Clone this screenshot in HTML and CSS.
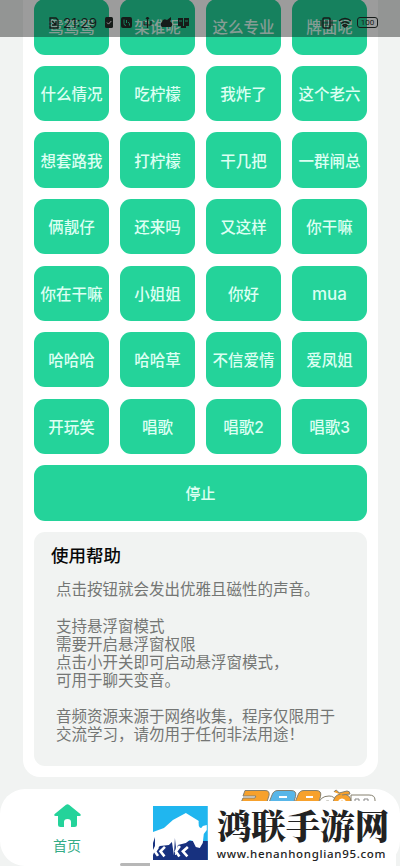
FILE: index.html
```html
<!DOCTYPE html>
<html lang="zh-CN">
<head>
<meta charset="utf-8">
<title>首页</title>
<link rel="stylesheet" href="styles.css">
</head>
<body>
<main class="card">
  <section class="grid">
    <button>鸳鸳鸳</button><button>架谁呢</button><button>这么专业</button><button>牌面呢</button>
    <button>什么情况</button><button>吃柠檬</button><button>我炸了</button><button>这个老六</button>
    <button>想套路我</button><button>打柠檬</button><button>干几把</button><button>一群闸总</button>
    <button>俩靓仔</button><button>还来吗</button><button>又这样</button><button>你干嘛</button>
    <button>你在干嘛</button><button>小姐姐</button><button>你好</button><button class="latin">mua</button>
    <button>哈哈哈</button><button>哈哈草</button><button>不信爱情</button><button>爱凤姐</button>
    <button>开玩笑</button><button>唱歌</button><button>唱歌2</button><button>唱歌3</button>
    <button class="stop">停止</button>
  </section>
  <section class="help">
    <h2>使用帮助</h2>
    <p>点击按钮就会发出优雅且磁性的声音。<br><br>支持悬浮窗模式<br>需要开启悬浮窗权限<br>点击小开关即可启动悬浮窗模式，<br>可用于聊天变音。<br><br>音频资源来源于网络收集，程序仅限用于<br>交流学习，请勿用于任何非法用途！</p>
  </section>
</main>

<header class="status">
  <div class="status-left">
    <svg width="10" height="12" viewBox="0 0 10 12" fill="none" stroke="currentColor" stroke-width="1.3"><path d="M1 1h6l2 2v8H1zM3 4l4 4M7 4v4H3"/></svg>
    <span class="clock">21:29</span>
    <svg class="check" width="8" height="11" viewBox="0 0 8 11"><rect width="8" height="11" rx="1.5" fill="currentColor"/><path d="M2 5.5l1.500 1.600L6.300 4" fill="none" stroke="#969696"/></svg>
    <svg class="call" width="11" height="11" viewBox="0 0 11 11"><rect width="11" height="11" rx="2" fill="currentColor"/><path d="M3 2.500v4q0 2 2 2M5.500 3v3M7 5q2 1 1.500 3.500" fill="none" stroke="#168461"/></svg>
    <svg class="usb" width="9" height="12" viewBox="0 0 9 12" fill="none" stroke="currentColor" stroke-width="1.2"><path d="M4.500 0v11M1 4v4h7V4M3 2l1.500-2L6 2"/></svg>
    <svg class="cloud" width="13" height="11" viewBox="0 0 13 11"><path d="M2 10a3 3 0 0 1 0-5Q3 1 7 3l4-3v3l-1 1q4 3 1 6z" fill="currentColor"/></svg>
    <svg class="book" width="11" height="11" viewBox="0 0 11 11"><path d="M0 1h5v8H0zM6 1h5v8H6zM3 9h5v2H3z" fill="currentColor"/><path d="M1 4h3M7 4h3" stroke="#168461"/></svg>
  </div>
  <div class="status-right">
    <svg width="13" height="12" viewBox="0 0 13 12" fill="none" stroke="currentColor"><rect x="3" y="1" width="7" height="10" rx="1" stroke-width="1.500"/><path d="M1 3v6M12 3v6M5 4h3M5 6h3M5 8h3"/></svg>
    <svg width="14" height="11" viewBox="0 0 14 11" fill="none" stroke="currentColor" stroke-width="1.600"><path d="M1 4q6-5 12 0M3 6.500q4-3.500 8 0M5 8.500q2-2 4 0L7 10z"/></svg>
    <span class="battery">100</span>
  </div>
</header>

<nav class="nav">
  <a class="home">
    <svg width="27" height="23" viewBox="0 0 27 23"><path d="M12 .7Q13.500-.4 15 .7L26.300 10q1.200 1.800-.8 2H23v8.500q0 2.500-2.500 2.500H17v-5q0-3-3.500-3T10 18v5H6.500Q4 23 4 20.500V12H1.500q-2-.2-.8-2z" fill="#24d39a"/></svg>
    <span>首页</span>
  </a>
  <i class="handle"></i>
  <div class="mark288"><svg width="142" height="24" viewBox="0 0 142 24">
    <g stroke="#85806f" stroke-width="1">
      <path d="M5 1.500h20q5 0 4 5L26 16H0l3-7h12l.8-2H3z" fill="#f7a12c"/>
      <path d="M38 1.500h13q6 0 4.500 6L53 16H28l4-10q1.500-4.500 6-4.500z" fill="#58b6e8"/>
      <path d="M64 1.500h12q6 0 4.500 6L78 16H54l4-10q1.500-4.500 6-4.500z" fill="#f7a12c"/>
      <path d="M78 16q2-9 11-9 6 0 6 5l-4 1q-6-3-8 3z" fill="#fff"/>
      <path d="M111 15V6h18q6 0 6 5v5z" fill="#fff"/>
      <path d="M93 16q0-11 9-11t9 8v3z" fill="#f7a12c"/>
      <path d="M94 3q2-4 5 1l8-2q3 0 3 3l-8 1" fill="#f7a12c"/>
    </g>
    <path d="M39 8h8M66 8h7M99 12q3-3 6 0" stroke="#fff" stroke-width="2" fill="none"/>
    <path d="M115 16v-6h4v6M124 16v-6h4v6" stroke="#888" fill="none"/>
  </svg></div>
  <div class="brand">
    <svg class="bison" width="55" height="54" viewBox="0 0 55 54">
      <path d="M0 0h55v54H0z" fill="#20b6ef"/>
      <path d="M0 35h55v19H0z" fill="#17317f"/>
      <path d="M0 26l11-4 9-8L33 7l13 8 1 4 3 1 4-1v5l-3 4-1 9-3 5-4-1-3-6-3-1-4 3-8 2-2 10h-2l-2-13-3 3-9 1-5 4-2 5H0V26z" fill="#fff"/>
      <path d="M47 12q-2 4-1 8 2 4 4 0 1-3-2-8z" fill="#20b6ef"/>
      <path d="M0 37l2-6v9l-2 4zM22 32l1 9-1 9h-1z" fill="#17317f"/>
      <path d="M12 41L7.500 45.500l4 5M35 41l-5 4.500 4.500 5M27 40l-4 5.500 3.500 5M5 41l-3 4.500L5 50" fill="none" stroke="#fff" stroke-width="2.600"/>
    </svg>
    <div class="brand-text"><strong>鸿联手游网</strong><span>www.henanhonglian95.com</span></div>
  </div>
</nav>
</body>
</html>
```
FILE: styles.css
```css
* { box-sizing: border-box; }
body {
  margin: 0;
  width: 400px;
  height: 866px;
  overflow: hidden;
  position: relative;
  background: #f1f3f2;
  font-family: "Noto Sans CJK SC", sans-serif;
}
.card {
  display: flow-root;
  width: 355px;
  height: 777px;
  margin-left: 23px;
  padding: 0 11px;
  background: #fff;
  border-radius: 0 0 17px 17px;
}
.grid {
  display: grid;
  grid-template-columns: repeat(4, 75px);
  grid-auto-rows: 55.400px;
  gap: 11.200px 11px;
  margin-top: -.8px;
}
button {
  border: 0;
  padding: 3px 0 0;
  border-radius: 11px;
  background: #24d39a;
  color: #dcfff2;
  font: 500 15.500px/20px Inter, "Noto Sans CJK SC", sans-serif;
  white-space: nowrap;
}
.latin { font-size: 17px; padding-top: 2px; }
.stop { grid-column: 1 / -1; font-size: 15px; padding-top: 3px; }
.help {
  height: 234.500px;
  margin-top: 11.300px;
  padding: 11px 17px;
  background: #f1f3f2;
  border-radius: 11px;
}
h2 {
  margin: 0;
  font-size: 17.500px;
  line-height: 23px;
  font-weight: 500;
  color: #080808;
}
p {
  margin: 13.500px 0 0 5px;
  font-size: 15.500px;
  line-height: 18.100px;
  color: #747674;
  white-space: nowrap;
}
.status {
  position: absolute;
  top: 0;
  left: 0;
  width: 400px;
  height: 37px;
  padding: 8px 22px 0 49px;
  background: rgba(0, 0, 0, .39);
  display: flex;
  justify-content: space-between;
  color: #161b19;
}
.status-left, .status-right { display: flex; align-items: center; height: 29px; }
.clock {
  width: 36px;
  margin-left: 4px;
  font: 400 13.500px/20px Inter, sans-serif;
}
.check { margin-left: 6px; }
.call { margin-left: 8px; }
.usb { margin-left: 11px; }
.cloud { margin-left: 8px; }
.book { margin-left: 5px; }
.status-right { gap: 5px; }
.battery {
  width: 21px;
  height: 11px;
  border: 1px solid;
  border-radius: 3px;
  font: 8px/9px Roboto, sans-serif;
  text-align: center;
}
.nav {
  position: absolute;
  top: 788.500px;
  left: 0;
  width: 400px;
  height: 77.500px;
  background: #fff;
  border-radius: 25px;
}
.home {
  width: 60px;
  margin: 15px 0 0 37px;
  display: flex;
  flex-direction: column;
  align-items: center;
  color: #35ac87;
  font-size: 14px;
  line-height: 20px;
}
.home span { margin-top: 8px; }
.handle {
  position: absolute;
  left: 120px;
  bottom: 0;
  width: 30px;
  height: 3px;
  border-radius: 2px 0 0 2px;
  background: #b7b7b7;
}
.mark288 { position: absolute; left: 240px; top: 0; height: 12.500px; overflow: hidden; }
.mark288 svg { display: block; }
.brand {
  position: absolute;
  left: 150px;
  top: 12.500px;
  width: 246px;
  height: 65px;
  padding: 5px 0 0 3px;
  background: #fff;
  display: flex;
}
.brand-text { margin-left: 9px; width: 180px; color: #222; }
.brand-text strong {
  display: block;
  height: 39px;
  font: 900 34.500px/36px "Noto Serif CJK SC", "Noto Sans CJK SC", serif;
  white-space: nowrap;
}
.brand-text span {
  display: block;
  font: 500 11.500px/17px "Noto Sans", sans-serif;
  letter-spacing: .68px;
  white-space: nowrap;
}
```
